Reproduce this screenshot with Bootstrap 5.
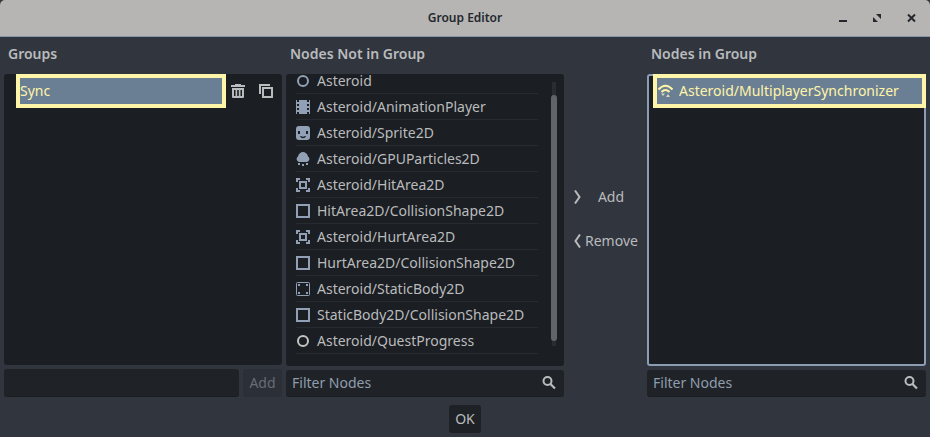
<!DOCTYPE html>
<html lang="en">
<head>
<meta charset="utf-8">
<meta name="viewport" content="width=device-width, initial-scale=1">
<title>Group Editor</title>
<link href="https://cdn.jsdelivr.net/npm/bootstrap@5.3.0/dist/css/bootstrap.min.css" rel="stylesheet">
<style>
  body { width: 930px; height: 437px; background: #31353e; color: #b9bbbd; font-family: "Noto Sans", sans-serif; font-size: 14px; line-height: 20px; }
  svg { display: block; flex: none; }
  .titlebar { height: 37px; background: #b6b5b3; color: #23272e; border-bottom: 1px solid #8795a8; font-size: 12px; font-weight: 600; border-radius: 5px 5px 0 0; }
  .win-controls { right: 11px; top: 11px; gap: 18px; }
  .pane { width: 278px; }
  .pane-end { width: 279px; }
  .pane-title { height: 37px; line-height: 34px; padding-left: 4px; font-weight: 600; font-size: 14px; }
  .well { height: 292px; background: #1b1e22; border-radius: 3px; }
  .well-left { height: 291px; }
  .well-focus { border: 2px solid #8c9db3; }
  .marked { border: 4px solid #fff5a8; background: #6b7f94; color: #fff5a8; height: 34px; }
  .mark-group { width: 210px; margin-left: 12px; }
  .mark-node { width: 273px; margin: -2px -2px 0 4px; padding-left: 1px; gap: 6px; }
  .node-list { width: 252px; padding-left: 10px; }
  .node-row { height: 26px; border-bottom: 1px solid #272a2f; gap: 7px; }
  .node-row:first-child { height: 20px; }
  .node-row:first-child > * { margin-top: -6px; }
  .node-row svg { color: #91a0b5; }
  .scroll-track { width: 4px; height: 264px; margin: 8px 8px 0 auto; background: #292c30; }
  .scroll-thumb { width: 6px; height: 246px; margin: 13px 0 0 -1px; background: #616569; border-radius: 3px; }
  .field { height: 27px; background: #1f2327; border-radius: 3px; border-bottom: 1px solid #1a1d20; color: #8f9dae; padding: 0 8px 0 6px; }
  .field-left, .add-off { height: 28px; }
  .field svg { color: #b9bbbd; }
  .tool-btn { background: none; border: 0; padding: 0; color: inherit; font-size: 14px; line-height: 20px; }
  .add-off { width: 39px; background: #2b2f37; color: #686d75; border-radius: 3px; }
  .ok-btn { width: 32px; height: 28px; background: #1e2226; border-radius: 3px; }
  .transfer { width: 83px; padding: 150px 10px 0 10px; gap: 24px; }
</style>
<script src="https://cdn.jsdelivr.net/npm/bootstrap@5.3.0/dist/js/bootstrap.bundle.min.js"></script>
</head>
<body class="overflow-hidden">
<svg class="d-none">
  <symbol id="ring" viewBox="0 0 14 14"><circle cx="7" cy="7" r="5" fill="none" stroke="currentColor" stroke-width="2"/></symbol>
  <symbol id="film" viewBox="0 0 14 14"><path fill="currentColor" d="M0 0h1v2h2V0h8v2h2V0h1v14h-1v-2h-2v2H3v-2H1v2H0zM1 4v2h2V4zm0 4v2h2V8zm10-4v2h2V4zm0 4v2h2V8z" fill-rule="evenodd"/></symbol>
  <symbol id="face" viewBox="0 0 14 14"><path fill="currentColor" fill-rule="evenodd" d="M3 0h8a3 3 0 0 1 3 3v8a3 3 0 0 1-3 3H3a3 3 0 0 1-3-3V3a3 3 0 0 1 3-3zM2 5v3h2V5zm8 0v3h2V5zM4 10c1 3 5 3 6 0H9c-1 1-3 1-4 0z"/></symbol>
  <symbol id="cloud" viewBox="0 0 14 14"><path fill="currentColor" d="M3 10a3 3 0 0 1-1-5.500C2.500 1.500 5 0 7 0s4.500 1.500 5 4.500A3 3 0 0 1 11 10zM2 11h2v2H2zm4 1h2v2H6zm4-1h2v2h-2z"/></symbol>
  <symbol id="area" viewBox="0 0 14 14"><path fill="none" stroke="currentColor" stroke-width="2" d="M1 4V1h3M10 1h3v3M13 10v3h-3M4 13H1v-3M4 4h6v6H4z"/></symbol>
  <symbol id="shape" viewBox="0 0 14 14"><path fill="none" stroke="currentColor" stroke-width="2" d="M1 1h12v12H1z"/></symbol>
  <symbol id="static" viewBox="0 0 14 14"><rect x=".5" y=".5" width="13" height="13" rx="1" fill="none" stroke="currentColor"/><path fill="currentColor" d="M2 2h2v2H2zm8 0h2v2h-2zM2 10h2v2H2zm8 0h2v2h-2z"/></symbol>
  <symbol id="search" viewBox="0 0 14 14"><circle cx="5.500" cy="5" r="4" fill="none" stroke="currentColor" stroke-width="2"/><path stroke="currentColor" stroke-width="2.200" d="M8 7.500l5 5"/></symbol>
</svg>

<header class="titlebar position-relative d-flex align-items-center justify-content-center">
  <span>Group Editor</span>
  <div class="win-controls position-absolute d-flex">
    <svg width="16" height="14" viewBox="0 0 16 14"><path fill="#23272e" d="M4 9h8v2H4z"/></svg>
    <svg width="16" height="14" viewBox="0 0 16 14"><path fill="#23272e" d="M7 3h5v5L10.500 6.500 8.500 4.500zM4 6l4.500 4.500L9 11H4z"/></svg>
    <svg width="16" height="14" viewBox="0 0 16 14"><path stroke="#23272e" stroke-width="2" d="M5 3.500l7 7M12 3.500l-7 7"/></svg>
  </div>
</header>

<main class="d-flex px-1">
  <section class="pane">
    <div class="pane-title">Groups</div>
    <div class="well well-left d-flex align-items-start">
      <div class="marked mark-group d-flex align-items-center">Sync</div>
      <button class="tool-btn" aria-label="Delete group"><svg width="14" height="14" viewBox="0 0 14 14" style="margin:10px 0 0 5px"><path fill="currentColor" fill-rule="evenodd" d="M4 0h6v1h4v2H0V1h4zM1 4h12v9q0 1-1 1H2q-1 0-1-1zM3 6v6h1.500V6zm3.200 0v6h1.600V6zm3.300 0v6H11V6z"/></svg></button>
      <button class="tool-btn" aria-label="Copy group"><svg width="14" height="14" viewBox="0 0 14 14" style="margin:10px 0 0 14px"><path fill="none" stroke="currentColor" stroke-width="2" d="M1 10V1h10M4 4h9v9H4z"/></svg></button>
    </div>
    <div class="d-flex gap-1 mt-1">
      <div class="field field-left flex-grow-1"></div>
      <button class="tool-btn add-off" disabled>Add</button>
    </div>
  </section>

  <section class="pane ms-1">
    <div class="pane-title">Nodes Not in Group</div>
    <div class="well d-flex overflow-hidden">
      <div class="node-list">
        <div class="node-row d-flex align-items-center"><svg width="14" height="14"><use href="#ring"/></svg><span>Asteroid</span></div>
        <div class="node-row d-flex align-items-center"><svg width="14" height="14"><use href="#film"/></svg><span>Asteroid/AnimationPlayer</span></div>
        <div class="node-row d-flex align-items-center"><svg width="14" height="14"><use href="#face"/></svg><span>Asteroid/Sprite2D</span></div>
        <div class="node-row d-flex align-items-center"><svg width="14" height="14"><use href="#cloud"/></svg><span>Asteroid/GPUParticles2D</span></div>
        <div class="node-row d-flex align-items-center"><svg width="14" height="14"><use href="#area"/></svg><span>Asteroid/HitArea2D</span></div>
        <div class="node-row d-flex align-items-center"><svg width="14" height="14"><use href="#shape"/></svg><span>HitArea2D/CollisionShape2D</span></div>
        <div class="node-row d-flex align-items-center"><svg width="14" height="14"><use href="#area"/></svg><span>Asteroid/HurtArea2D</span></div>
        <div class="node-row d-flex align-items-center"><svg width="14" height="14"><use href="#shape"/></svg><span>HurtArea2D/CollisionShape2D</span></div>
        <div class="node-row d-flex align-items-center"><svg width="14" height="14"><use href="#static"/></svg><span>Asteroid/StaticBody2D</span></div>
        <div class="node-row d-flex align-items-center"><svg width="14" height="14"><use href="#shape"/></svg><span>StaticBody2D/CollisionShape2D</span></div>
        <div class="node-row d-flex align-items-center"><svg width="14" height="14" style="color:#c4c4c2"><use href="#ring"/></svg><span>Asteroid/QuestProgress</span></div>
      </div>
      <div class="scroll-track d-flex"><div class="scroll-thumb flex-shrink-0"></div></div>
    </div>
    <div class="field mt-1 d-flex align-items-center justify-content-between"><span>Filter Nodes</span><svg width="14" height="14"><use href="#search"/></svg></div>
  </section>

  <div class="transfer d-flex flex-column">
    <button class="tool-btn d-flex align-items-center"><svg width="7" height="14" viewBox="0 0 7 14"><path fill="none" stroke="currentColor" stroke-width="2" d="M1 .500L5.500 7 1 13.500"/></svg><span class="flex-grow-1 ps-1">Add</span></button>
    <button class="tool-btn d-flex align-items-center"><svg width="7" height="14" viewBox="0 0 7 14"><path fill="none" stroke="currentColor" stroke-width="2" d="M6 .500L1.500 7 6 13.500"/></svg><span class="ps-1">Remove</span></button>
  </div>

  <section class="pane-end">
    <div class="pane-title">Nodes in Group</div>
    <div class="well well-focus">
      <div class="marked mark-node d-flex align-items-center">
        <svg width="15" height="14" viewBox="0 0 15 14"><path fill="none" stroke="currentColor" stroke-width="2" d="M.500 5.500Q7.500-2 14.500 5.500M3.500 8Q7.500 4 11.500 8"/><path fill="#d9d9b4" d="M3 9.500h4L5 12zM8 13l2-3 2 3z"/></svg>
        <span>Asteroid/MultiplayerSynchronizer</span>
      </div>
    </div>
    <div class="field mt-1 d-flex align-items-center justify-content-between"><span>Filter Nodes</span><svg width="14" height="14"><use href="#search"/></svg></div>
  </section>
</main>
<footer class="d-flex justify-content-center pt-2"><button class="tool-btn ok-btn">OK</button></footer>
</body>
</html>
